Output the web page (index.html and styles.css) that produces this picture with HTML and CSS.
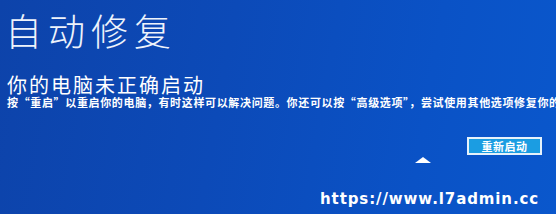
FILE: index.html
```html
<!DOCTYPE html>
<html lang="zh-CN">
<head>
<meta charset="utf-8">
<title>自动修复</title>
<link rel="stylesheet" href="styles.css">
</head>
<body>
<div class="screen">
  <h1 class="title">自动修复</h1>
  <h2 class="heading">你的电脑未正确启动</h2>
  <p class="desc">按“重启”以重启你的电脑，有时这样可以解决问题。你还可以按“高级选项”，尝试使用其他选项修复你的电脑。</p>
  <div class="actions">
    <button class="btn">重新启动</button>
  </div>
  <div class="cursor"></div>
  <div class="watermark">https://www.l7admin.cc</div>
</div>
</body>
</html>
```
FILE: styles.css
```css
html, body {
  margin: 0;
  padding: 0;
}
body {
  width: 556px;
  height: 214px;
  overflow: hidden;
  font-family: "Noto Sans CJK SC", "Noto Sans", sans-serif;
}
.screen {
  position: relative;
  width: 556px;
  height: 214px;
  box-sizing: border-box;
  padding: 6px 0 0 5px;
  background: linear-gradient(100deg, #0d43aa 0%, #0c4ab8 40%, #0a52c6 75%, #0a57cc 100%);
  color: #fff;
  overflow: hidden;
  display: flex;
  flex-direction: column;
}
.title {
  margin: 0;
  font-size: 37px;
  line-height: 48px;
  font-weight: 300;
  letter-spacing: 6px;
  color: #eef3fb;
  white-space: nowrap;
}
.heading {
  margin: 19px 0 0 2px;
  font-size: 20px;
  line-height: 23px;
  font-weight: 400;
  letter-spacing: 2px;
  white-space: nowrap;
}
.desc {
  margin: 0 0 0 2px;
  font-size: 11px;
  line-height: 13px;
  font-weight: 700;
  letter-spacing: 0.65px;
  white-space: nowrap;
}
.actions {
  display: flex;
  justify-content: flex-end;
  padding-right: 14px;
  margin-top: 28px;
}
.btn {
  width: 75px;
  height: 18px;
  padding: 0;
  border: 2px solid #e6f2fb;
  background: #1b9de2;
  color: #fff;
  font-family: "Noto Sans CJK SC", sans-serif;
  font-size: 11px;
  font-weight: 700;
  line-height: 14px;
  letter-spacing: 0.5px;
}
.cursor {
  position: absolute;
  left: 415px;
  top: 157px;
  width: 0;
  height: 0;
  border-left: 8px solid transparent;
  border-right: 8px solid transparent;
  border-bottom: 6px solid #fff;
}
.watermark {
  position: absolute;
  left: 320px;
  top: 189px;
  font-family: "DejaVu Sans", sans-serif;
  font-weight: 700;
  font-size: 15px;
  line-height: 20px;
  letter-spacing: 0.9px;
  color: #fff;
  white-space: nowrap;
}
```
